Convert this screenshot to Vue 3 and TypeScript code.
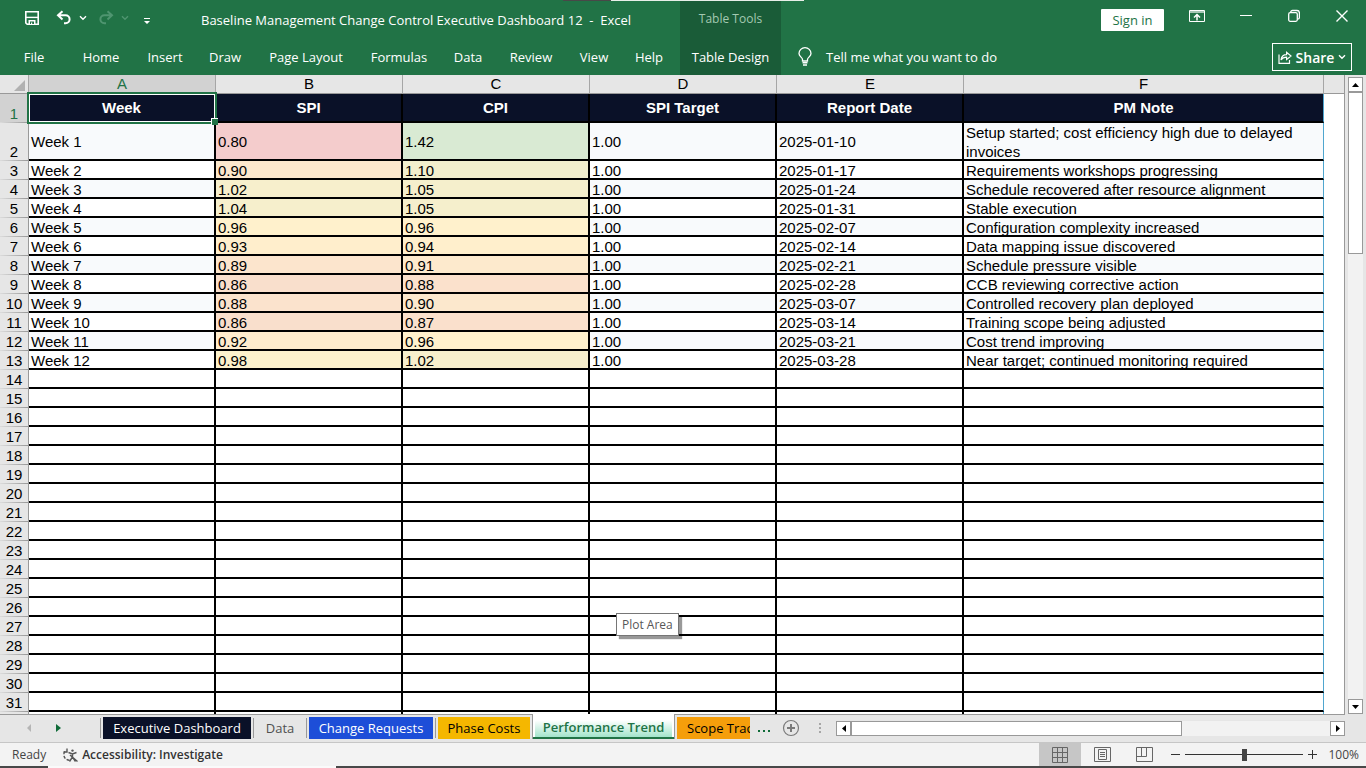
<script setup lang="ts">
import { ref } from 'vue'

interface WeekRow {
  n: number
  week: string
  spi: string
  spiFill: string
  cpi: string
  cpiFill: string
  target: string
  date: string
  note: string
}

const columns = ['A', 'B', 'C', 'D', 'E', 'F']
const headings = ['Week', 'SPI', 'CPI', 'SPI Target', 'Report Date', 'PM Note']

const source: [string, string, string, string, string, string][] = [
  ['0.80', '#f4cccc', '1.42', '#d9ead3', '2025-01-10', 'Setup started; cost efficiency high due to delayed invoices'],
  ['0.90', '#fce8cd', '1.10', '#f2efcd', '2025-01-17', 'Requirements workshops progressing'],
  ['1.02', '#f7efcc', '1.05', '#f5efcc', '2025-01-24', 'Schedule recovered after resource alignment'],
  ['1.04', '#f6efcc', '1.05', '#f5efcc', '2025-01-31', 'Stable execution'],
  ['0.96', '#fff1cc', '0.96', '#fff1cc', '2025-02-07', 'Configuration complexity increased'],
  ['0.93', '#ffeecc', '0.94', '#ffefcc', '2025-02-14', 'Data mapping issue discovered'],
  ['0.89', '#fce5cd', '0.91', '#fdeacd', '2025-02-21', 'Schedule pressure visible'],
  ['0.86', '#f9dfcc', '0.88', '#fbe1cc', '2025-02-28', 'CCB reviewing corrective action'],
  ['0.88', '#fbe3cd', '0.90', '#fce8cd', '2025-03-07', 'Controlled recovery plan deployed'],
  ['0.86', '#f9dfcc', '0.87', '#fae0cc', '2025-03-14', 'Training scope being adjusted'],
  ['0.92', '#feeccd', '0.96', '#fff1cc', '2025-03-21', 'Cost trend improving'],
  ['0.98', '#fdf2cc', '1.02', '#f7efcc', '2025-03-28', 'Near target; continued monitoring required'],
]

const rows: WeekRow[] = source.map(([spi, spiFill, cpi, cpiFill, date, note], i) => ({
  n: i + 2,
  week: `Week ${i + 1}`,
  spi,
  spiFill,
  cpi,
  cpiFill,
  target: '1.00',
  date,
  note,
}))

const lastNumbered = 31
const emptyRows = Array.from({ length: 19 }, (_, i) => i + 14)

const ribbonTabs = ['File', 'Home', 'Insert', 'Draw', 'Page Layout', 'Formulas', 'Data', 'Review', 'View', 'Help']
const zoomLevel = ref(100)
</script>

<template>
  <div class="window">
    <header class="ribbon">
      <div class="sliver"><span class="sliver-dark"></span><span class="sliver-light"></span></div>
      <div class="main-part">
        <div class="title-row">
          <div class="quick">
            <button class="icon-btn" aria-label="Save">
              <svg width="16" height="16" viewBox="0 0 16 16" fill="none" stroke="#fff" stroke-width="1.6">
                <path d="M1.8 1.8h12.4v12.4H3.2L1.8 12.8z" />
                <path d="M2 7.400h12" stroke-width="1.400" />
                <path d="M4.500 14v-4h7v4z" fill="#fff" stroke="none" />
                <path d="M6 11.500h4V14H8.200v-1.500H7V14H6z" fill="#217346" stroke="none" />
              </svg>
            </button>
            <button class="icon-btn undo" aria-label="Undo">
              <svg width="16" height="16" viewBox="0 0 16 16" fill="none" stroke="#fff" stroke-width="2">
                <path d="M6.500 1.200L2 5.300l4.500 4.200M2.400 5.300h7.200a4 4 0 0 1 0 8H8" />
              </svg>
            </button>
            <button class="icon-btn chev" aria-label="Undo history">
              <svg width="8" height="6" viewBox="0 0 8 6" fill="none" stroke="#fff" stroke-width="1.4"><path d="M1 1.200l3 3 3-3" /></svg>
            </button>
            <button class="icon-btn redo" aria-label="Redo" disabled>
              <svg width="16" height="16" viewBox="0 0 16 16" fill="none" stroke="#4f9570" stroke-width="2">
                <path d="M9.500 1.200L14 5.300 9.500 9.500M13.600 5.300H6.400a4 4 0 0 0 0 8H8" />
              </svg>
            </button>
            <button class="icon-btn chev" aria-label="Redo history" disabled>
              <svg width="8" height="6" viewBox="0 0 8 6" fill="none" stroke="#4f9570" stroke-width="1.4"><path d="M1 1.200l3 3 3-3" /></svg>
            </button>
            <button class="icon-btn custom" aria-label="Customize Quick Access Toolbar">
              <svg width="8" height="8" viewBox="0 0 8 8" fill="#fff"><path d="M1 1h6v1H1zM1 4h6L4 7z" /></svg>
            </button>
          </div>
          <div class="title">Baseline Management Change Control Executive Dashboard 12&nbsp; -&nbsp; Excel</div>
        </div>
        <nav class="tabs" aria-label="Ribbon">
          <button v-for="t in ribbonTabs" :key="t">{{ t }}</button>
        </nav>
      </div>
      <div class="context-part">
        <div class="context-title">Table Tools</div>
        <button class="context-tab">Table Design</button>
      </div>
      <div class="right-part">
        <div class="window-row">
          <button class="sign-in">Sign in</button>
          <button class="icon-btn" aria-label="Ribbon display options">
            <svg width="16" height="14" viewBox="0 0 16 14" fill="none" stroke="#fff">
              <path d="M.5 1.500h15v11H.5z" /><path d="M1 2h14v2H1z" fill="#fff" fill-opacity=".6" stroke="none" />
              <path d="M8 11.500V6M5 8.500l3-3 3 3" stroke-width="1.500" />
            </svg>
          </button>
          <button class="icon-btn min" aria-label="Minimize">
            <svg width="12" height="14" viewBox="0 0 12 14" stroke="#fff"><path d="M0 6.500h12" /></svg>
          </button>
          <button class="icon-btn" aria-label="Restore">
            <svg width="12" height="14" viewBox="0 0 12 14" fill="none" stroke="#fff" stroke-width="1.300">
              <rect x=".7" y="3.700" width="8.600" height="8.600" rx="1.500" />
              <path d="M2.700 3.200c0-1 .8-1.700 1.800-1.700H9c1.400 0 2.400 1 2.400 2.400v4.500c0 1-.7 1.800-1.700 1.800" />
            </svg>
          </button>
          <button class="icon-btn" aria-label="Close">
            <svg width="12" height="14" viewBox="0 0 12 14" stroke="#fff" stroke-width="1.400"><path d="M.5 1.500l11 11M11.500 1.500l-11 11" /></svg>
          </button>
        </div>
        <div class="tell-row">
          <button class="tell">
            <svg width="14" height="20" viewBox="0 0 14 20" fill="none" stroke="#fff" stroke-width="1.300">
              <path d="M4.500 14v-1.500C4.500 10.500 1 9.500 1 6.500a6 5.800 0 0 1 12 0c0 3-3.500 4-3.500 6V14z" />
              <path d="M4.500 15.700h5M5 18h4" stroke-width="1.500" />
            </svg>
            <span>Tell me what you want to do</span>
          </button>
          <button class="share">
            <svg width="14" height="14" viewBox="0 0 14 14" fill="none" stroke="#fff" stroke-width="1.200">
              <path d="M1 4.500v8.900h10.500V10" />
              <path d="M3 10c.4-3.500 2.500-5.300 5.600-5.300V2.200L13 6 8.600 9.600V7.200C6 7.200 4.300 8 3 10z" />
            </svg>
            <span>Share</span>
            <svg width="8" height="6" viewBox="0 0 8 6" fill="none" stroke="#fff" stroke-width="1.400"><path d="M1 1.200l3 3 3-3" /></svg>
          </button>
        </div>
      </div>
    </header>

    <main class="workspace">
      <div class="sheet">
        <table>
          <colgroup>
            <col class="c-num" /><col v-for="c in 5" :key="c" class="c-std" /><col class="c-note" />
          </colgroup>
          <thead>
            <tr class="letters">
              <th class="corner"><svg width="11" height="11" viewBox="0 0 11 11"><path d="M11 0v11H0z" fill="#b1b1b1" /></svg></th>
              <th v-for="c in columns" :key="c" :class="{ picked: c === 'A' }">{{ c }}</th>
            </tr>
          </thead>
          <tbody>
            <tr class="headings">
              <th class="num picked">1</th>
              <td v-for="(h, i) in headings" :key="h">{{ h }}<span v-if="i === 0" class="selection"></span></td>
            </tr>
            <tr v-for="r in rows" :key="r.n" :class="{ band: r.n % 2 === 0, tall: r.n === 2 }">
              <th class="num">{{ r.n }}</th>
              <td><div class="cell">{{ r.week }}</div></td>
              <td :style="{ background: r.spiFill }"><div class="cell">{{ r.spi }}</div></td>
              <td :style="{ background: r.cpiFill }"><div class="cell">{{ r.cpi }}</div></td>
              <td><div class="cell">{{ r.target }}</div></td>
              <td><div class="cell">{{ r.date }}</div></td>
              <td><div class="cell note">{{ r.note }}</div></td>
            </tr>
            <tr v-for="n in emptyRows" :key="n">
              <th class="num">{{ n <= lastNumbered ? n : '' }}</th>
              <td v-for="c in columns" :key="c"></td>
            </tr>
          </tbody>
        </table>
        <div class="letters-rest"></div>
        <div class="tooltip" role="tooltip">Plot Area</div>
      </div>
      <div class="vscroll">
        <button aria-label="Scroll up"><svg width="7" height="4" viewBox="0 0 7 4"><path d="M0 4h7L3.500 0z" /></svg></button>
        <div class="vthumb"></div>
        <div class="fill"></div>
        <button aria-label="Scroll down"><svg width="7" height="4" viewBox="0 0 7 4"><path d="M0 0h7L3.500 4z" /></svg></button>
      </div>
    </main>

    <div class="sheet-bar">
      <div class="nav">
        <button class="icon-btn" aria-label="Previous sheets"><svg width="4" height="8" viewBox="0 0 4 8" fill="#b5b5b5"><path d="M4 0v8L0 4z" /></svg></button>
        <button class="icon-btn" aria-label="Next sheets"><svg width="5" height="8" viewBox="0 0 5 8" fill="#0f6b38"><path d="M0 0v8l5-4z" /></svg></button>
      </div>
      <button class="stab exec">Executive Dashboard</button>
      <button class="stab data">Data</button>
      <button class="stab change">Change Requests</button>
      <button class="stab phase">Phase Costs</button>
      <button class="stab active"><span>Performance Trend</span></button>
      <button class="stab scope"><span>Scope Tracker</span></button>
      <button class="more" aria-label="More sheets">
        <svg width="12" height="3" viewBox="0 0 12 3" fill="#0f6b38"><path d="M0 0h2v2H0zM5 0h2v2H5zM10 0h2v2h-2z" /></svg>
      </button>
      <button class="icon-btn add" aria-label="New sheet">
        <svg width="18" height="18" viewBox="0 0 18 18" fill="none" stroke="#7a7a7a"><circle cx="9" cy="9" r="7.500" stroke-width="1.200" /><path d="M9 5v8M5 9h8" stroke-width="2" /></svg>
      </button>
      <svg class="dots" width="2" height="11" viewBox="0 0 2 11" fill="#a6a6a6"><path d="M0 0h2v2H0zM0 4h2v2H0zM0 8h2v2H0z" /></svg>
      <div class="hscroll">
        <button aria-label="Scroll left"><svg width="4" height="7" viewBox="0 0 4 7"><path d="M4 0v7L0 3.500z" /></svg></button>
        <div class="hthumb"></div>
        <div class="fill"></div>
        <button aria-label="Scroll right"><svg width="4" height="7" viewBox="0 0 4 7"><path d="M0 0v7l4-3.500z" /></svg></button>
      </div>
    </div>

    <footer class="status">
      <span class="ready">Ready</span>
      <button class="access">
        <svg width="17" height="16" viewBox="0 0 17 16" fill="none" stroke="#555" stroke-width="1.400">
          <path d="M7.500 13.200A5.600 5.600 0 0 1 4 3.200" stroke-dasharray="3 1.500" />
          <path d="M5 1.500v3.500H1.500" />
          <path d="M6.500 5.500l4 1.500 4-1.500M10.500 7v3l-3 4.500M10.500 10l3 4.500M8 8l7.500 6.500" />
          <circle cx="10.500" cy="3.600" r="1.200" fill="#555" stroke="none" />
        </svg>
        <span>Accessibility: Investigate</span>
      </button>
      <span class="grow"></span>
      <button class="view on" aria-label="Normal">
        <svg width="16" height="16" viewBox="0 0 16 16" fill="none" stroke="#666"><path d="M.5.500h15v15H.5zM5.500.500v15M10.500.500v15M.5 5.500h15M.5 10.500h15" /></svg>
      </button>
      <button class="view" aria-label="Page Layout">
        <svg width="17" height="16" viewBox="0 0 17 16" fill="none" stroke="#666"><path d="M.5.500h16v14H.5zM4.500 2.500h8v10h-8zM6 5.500h5M6 7.500h5M6 9.500h5" /></svg>
      </button>
      <button class="view" aria-label="Page Break Preview">
        <svg width="17" height="16" viewBox="0 0 17 16" fill="none" stroke="#666"><path d="M.5.500h16v14H.5zM5.500.500v9M10.500.500v9M.5 9.500h10" /></svg>
      </button>
      <button class="icon-btn zbtn" aria-label="Zoom out"><svg width="11" height="11" viewBox="0 0 11 11" stroke="#333"><path d="M1 5.500h9" /></svg></button>
      <input v-model.number="zoomLevel" class="zoom" type="range" min="0" max="200" aria-label="Zoom" />
      <button class="icon-btn zbtn" aria-label="Zoom in"><svg width="11" height="11" viewBox="0 0 11 11" stroke="#333"><path d="M1 5.500h9M5.500 1v9" /></svg></button>
      <span class="pct">{{ zoomLevel }}%</span>
    </footer>
    <div class="desk"><span></span></div>
  </div>
</template>

<style>
body {
  margin: 0;
  overflow: hidden;
}
</style>

<style scoped>
* {
  box-sizing: border-box;
}
.window {
  display: flex;
  flex-direction: column;
  height: 100vh;
  overflow: hidden;
  background: #e6e6e6;
  color: #000;
  font-family: "Open Sans", "Noto Sans", sans-serif;
  font-size: 13px;
}
button {
  margin: 0;
  padding: 0;
  border: 0;
  background: none;
  color: inherit;
  font: inherit;
  white-space: nowrap;
}
svg {
  display: block;
  flex: none;
}
.icon-btn {
  display: flex;
  align-items: center;
  justify-content: center;
  flex: none;
}
.ribbon {
  position: relative;
  display: flex;
  flex: none;
  height: 75px;
  background: #217346;
  color: #fff;
}
.sliver {
  position: absolute;
  top: 0;
  left: 563px;
  display: flex;
  height: 1px;
}
.sliver-dark {
  width: 48px;
  background: #484848;
}
.sliver-light {
  width: 193px;
  background: #e8efe9;
}
.main-part {
  width: 680px;
  flex: none;
}
.title-row {
  display: flex;
  align-items: center;
  height: 40px;
}
.quick {
  display: flex;
  align-items: center;
  width: 201px;
  height: 36px;
  padding: 0 0 4px 24px;
}
.undo {
  margin-left: 16px;
}
.chev {
  margin-left: 7px;
}
.redo {
  margin-left: 11px;
}
.custom {
  margin: 6px 0 0 14px;
}
.title {
  white-space: nowrap;
}
.tabs {
  display: grid;
  grid-template-columns: 68px 66px 62px 58px 104px 82px 56px 70px 56px 54px;
  height: 34px;
}
.context-part {
  display: flex;
  flex-direction: column;
  width: 101px;
  flex: none;
  background: #1a5c38;
}
.context-title {
  height: 40px;
  color: #a3c9b1;
  font-size: 12px;
  line-height: 38px;
  text-align: center;
}
.context-tab {
  height: 34px;
}
.right-part {
  flex: 1;
  min-width: 0;
}
.window-row {
  display: flex;
  align-items: flex-start;
  justify-content: flex-end;
  gap: 36px;
  height: 40px;
  padding: 9px 18px 0 0;
}
.sign-in {
  width: 63px;
  height: 22px;
  margin-right: -11px;
  border-radius: 1px;
  background: #fff;
  color: #217346;
}
.min {
  margin-left: -1px;
}
.tell-row {
  display: flex;
  align-items: center;
  justify-content: space-between;
  height: 34px;
  padding: 0 14px 0 17px;
}
.tell {
  display: flex;
  align-items: center;
  gap: 14px;
}
.share {
  display: flex;
  align-items: center;
  justify-content: center;
  gap: 4px;
  width: 80px;
  height: 28px;
  border: 1px solid #fff;
  font-size: 14px;
  font-weight: 600;
}
.workspace {
  display: flex;
  flex: 1;
  min-height: 0;
}
.sheet {
  position: relative;
  flex: 1;
  min-width: 0;
  overflow: hidden;
  border-right: 1px solid #999;
  background: #fff;
  font-family: "Liberation Sans", Arial, sans-serif;
  font-size: 15px;
  line-height: 19px;
}
table {
  position: relative;
  width: 1324px;
  border-collapse: separate;
  border-spacing: 0;
  table-layout: fixed;
}
.c-num {
  width: 29px;
}
.c-std {
  width: 187px;
}
.c-note {
  width: 360px;
}
th,
td {
  height: 19px;
  padding: 0;
}
th {
  font-weight: 400;
}
.letters th {
  border-right: 1px solid #a6a6a6;
  border-bottom: 1px solid #999;
  background: #e6e6e6;
  line-height: 18px;
}
.letters th.corner svg {
  margin: 2px 0 0 14px;
}
.letters th.picked,
.num.picked {
  background-color: #d2d2d2;
  color: #217346;
}
.letters-rest {
  position: absolute;
  top: 0;
  right: 0;
  left: 1324px;
  height: 19px;
  border-bottom: 1px solid #999;
  background: #e6e6e6;
}
.num {
  border-right: 1px solid #999;
  background: #e6e6e6 linear-gradient(to right, #dcdcdc, #999) bottom / 100% 1px no-repeat;
  vertical-align: bottom;
}
td {
  border-right: 2px solid #000;
  border-bottom: 2px solid #000;
  vertical-align: middle;
}
td:last-child {
  border-right: 1px solid #4fa6cf;
}
.headings td {
  position: relative;
  height: 29px;
  background: #0a1128;
  color: #fff;
  font-weight: 700;
  text-align: center;
}
.selection {
  position: absolute;
  z-index: 2;
  inset: -2px -3px -3px -2px;
  border: 2px solid #217346;
  box-shadow: inset 0 0 0 1px #fff;
}
.selection::after {
  position: absolute;
  right: -3px;
  bottom: -3px;
  width: 6px;
  height: 6px;
  border: solid #fff;
  border-width: 1px 0 0 1px;
  background: #217346;
  content: "";
}
.band td {
  background: #f8fafc;
}
.cell {
  height: 17px;
  padding: 0 2px;
  overflow: hidden;
  white-space: nowrap;
}
.tall td {
  height: 38px;
}
.tall .cell {
  height: 19px;
}
.tall .note {
  height: 36px;
  white-space: normal;
}
.tooltip {
  position: absolute;
  top: 538px;
  left: 616px;
  padding: 1px 5px 0;
  border: 1px solid #767676;
  background: #fff;
  box-shadow: 3px 3px 1px rgba(0, 0, 0, 0.4);
  color: #575757;
  font-family: "Open Sans", "Noto Sans", sans-serif;
  font-size: 12px;
  line-height: 20px;
}
.vscroll {
  display: flex;
  flex-direction: column;
  width: 15px;
  margin: 2px 3px 0;
  background: #f2f2f2;
}
.vscroll button,
.hscroll button {
  display: flex;
  align-items: center;
  justify-content: center;
  flex: none;
  width: 15px;
  height: 15px;
  border: 1px solid #999;
  background: #fff;
}
.vthumb {
  height: 162px;
  border: 1px solid #999;
  background: #fff;
}
.fill {
  flex: 1;
}
.sheet-bar {
  display: flex;
  align-items: flex-start;
  flex: none;
  height: 29px;
  padding-right: 21px;
  border-bottom: 1px solid #c6c6c6;
  background: linear-gradient(#999, #999) top left / calc(100% - 21px) 1px no-repeat #e6e6e6;
}
.nav {
  display: flex;
  align-items: center;
  gap: 25px;
  width: 100px;
  height: 27px;
  padding-left: 27px;
}
.stab {
  position: relative;
  flex: none;
  height: 22px;
  margin: 3px 2px 0 3px;
  padding-bottom: 1px;
}
.exec::before,
.stab::after {
  position: absolute;
  top: 1px;
  right: -3px;
  width: 1px;
  height: 20px;
  background: #999;
  content: "";
}
.exec::before {
  right: auto;
  left: -3px;
}
.exec {
  width: 148px;
  background: #0a1128;
  color: #fff;
}
.data {
  width: 48px;
  color: #505050;
}
.change {
  width: 124px;
  background: #1d4ed8;
  color: #fff;
}
.phase {
  width: 92px;
  background: #f5b700;
}
.phase::after,
.active::after,
.scope::after {
  display: none;
}
.active {
  width: 143px;
  height: 25px;
  margin: 0;
  padding: 1px 2px 2px;
  border: solid #999;
  border-width: 0 1px;
  background: #fff;
  box-shadow: inset 0 -2px #217346;
  color: #217346;
  font-weight: 600;
}
.active span {
  display: block;
  height: 21px;
  background: linear-gradient(#fff 20%, #a3e4cb);
  line-height: 22px;
}
.scope {
  width: 73px;
  margin-right: 0;
  margin-left: 2px;
  padding-left: 10px;
  overflow: hidden;
  background: #f59e0b;
  text-align: left;
}
.more {
  margin: 16px 0 0 8px;
}
.add {
  margin: 5px 0 0 12px;
}
.dots {
  margin: 9px 0 0 19px;
}
.hscroll {
  display: flex;
  flex: 1;
  height: 15px;
  margin: 7px 0 0 15px;
  background: #f2f2f2;
}
.hthumb {
  width: 331px;
  border: 1px solid #999;
  background: #fff;
}
.status {
  display: flex;
  align-items: center;
  flex: none;
  height: 23px;
  padding: 0 7px 0 12px;
  background: #f3f3f3;
  color: #444;
  font-size: 12px;
}
.access {
  display: flex;
  align-items: center;
  gap: 3px;
  margin-left: 16px;
  color: #333;
  font-weight: 600;
}
.grow {
  flex: 1;
}
.view {
  display: flex;
  align-items: center;
  justify-content: center;
  width: 42px;
  height: 23px;
}
.view.on {
  background: #c6c6c6;
}
.zbtn {
  width: 11px;
}
.view + .zbtn {
  margin-left: 5px;
}
.zoom {
  width: 118px;
  height: 13px;
  margin: 0 4px;
  background: linear-gradient(#333, #333) center / 100% 1px no-repeat;
  appearance: none;
}
.zoom::-webkit-slider-thumb {
  width: 5px;
  height: 12px;
  background: #444;
  appearance: none;
}
.pct {
  width: 41px;
  text-align: right;
}
.desk {
  flex: none;
  height: 2px;
  padding-left: 48px;
  background: #484848;
}
.desk span {
  display: block;
  width: 288px;
  height: 2px;
  background: #fafafa;
}
</style>
